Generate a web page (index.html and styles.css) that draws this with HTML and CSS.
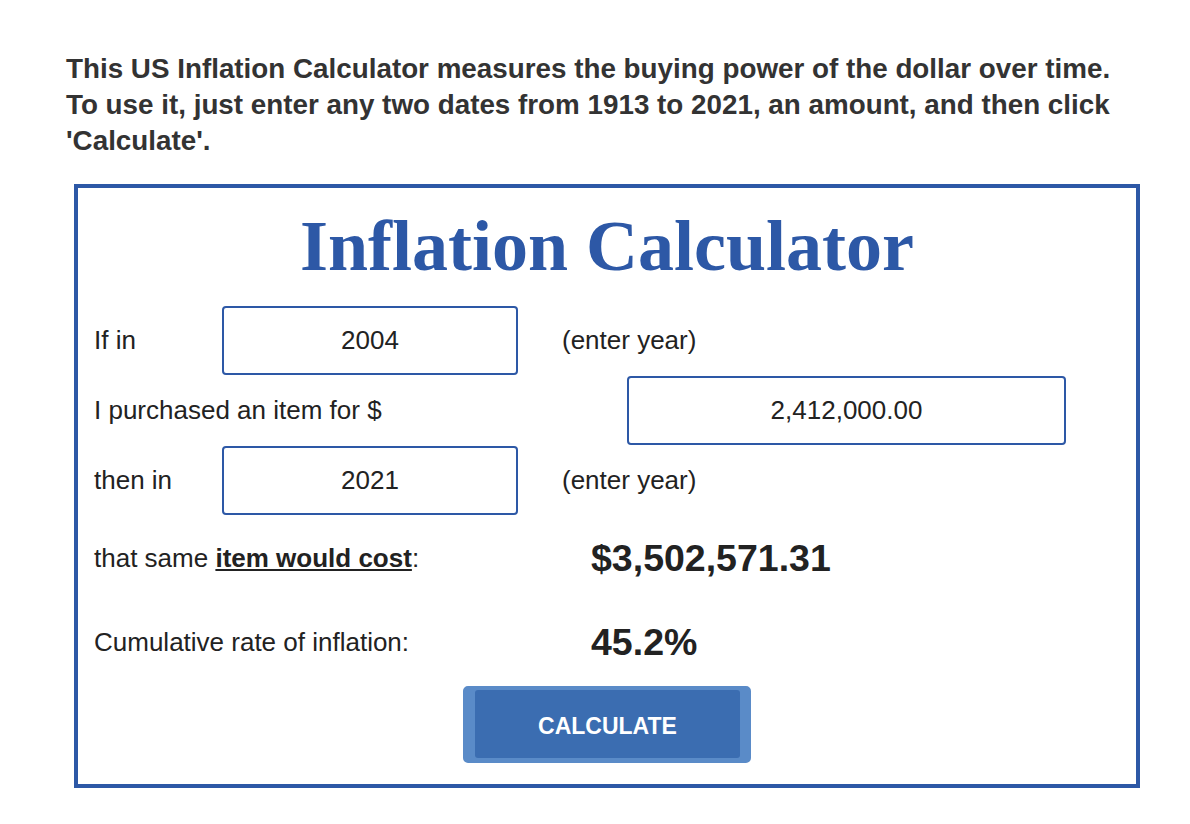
FILE: index.html
```html
<!DOCTYPE html>
<html lang="en">
<head>
<meta charset="utf-8">
<title>US Inflation Calculator</title>
<link rel="stylesheet" href="styles.css">
</head>
<body>
<div class="page">
  <p class="intro">This US Inflation Calculator measures the buying power of the dollar over time.<br>To use it, just enter any two dates from 1913 to 2021, an amount, and then click 'Calculate'.</p>
  <div class="calc">
    <h1 class="calc-title">Inflation Calculator</h1>
    <div class="row">
      <span class="label label-year">If in</span>
      <div class="field field-year">2004</div>
      <span class="hint">(enter year)</span>
    </div>
    <div class="row">
      <span class="label label-amount">I purchased an item for $</span>
      <div class="field field-amount">2,412,000.00</div>
    </div>
    <div class="row">
      <span class="label label-year">then in</span>
      <div class="field field-year">2021</div>
      <span class="hint">(enter year)</span>
    </div>
    <div class="row row-result">
      <span class="label label-result">that same <a class="link">item would cost</a>:</span>
      <span class="value">$3,502,571.31</span>
    </div>
    <div class="row row-result">
      <span class="label label-result">Cumulative rate of inflation:</span>
      <span class="value">45.2%</span>
    </div>
    <div class="actions">
      <button class="btn" type="button"><span class="btn-inner">CALCULATE</span></button>
    </div>
  </div>
</div>
</body>
</html>
```
FILE: styles.css
```css
* { box-sizing: border-box; }
html, body { margin: 0; padding: 0; background: #fff; }
body {
  font-family: "Liberation Sans", Arial, Helvetica, sans-serif;
  color: #222;
}
.page {
  width: 1074px;
  margin-left: 66px;
  padding-top: 51px;
}
.intro {
  margin: 0;
  font-size: 27.8px;
  line-height: 36px;
  font-weight: bold;
  color: #333;
}
.calc {
  margin: 25px 0 0 8px;
  width: 1066px;
  border: 4px solid #2d58a6;
  padding: 18px 0 21px 16px;
}
.calc-title {
  margin: 0 0 20px -16px;
  text-align: center;
  font-family: "Liberation Serif", "Times New Roman", serif;
  font-size: 72px;
  line-height: 80px;
  font-weight: bold;
  color: #2d58a6;
}
.row {
  display: flex;
  align-items: center;
  height: 69px;
  margin-bottom: 1px;
  font-size: 26px;
}
.label { flex: none; }
.label-year { width: 128px; }
.label-amount { width: 533px; }
.label-result { width: 497px; }
.field {
  flex: none;
  height: 69px;
  border: 2px solid #2d58a6;
  border-radius: 4px;
  display: flex;
  align-items: center;
  justify-content: center;
  font-size: 26px;
  color: #222;
}
.field-year { width: 296px; }
.field-amount { width: 439px; }
.hint { margin-left: 44px; }
.row-result { height: 84px; margin-bottom: 0; }
.link {
  font-weight: bold;
  text-decoration: underline;
  color: #222;
}
.value {
  font-size: 37.5px;
  font-weight: bold;
  color: #222;
}
.actions {
  display: flex;
  justify-content: center;
  margin: 2px 0 0 -16px;
}
.btn {
  width: 288px;
  height: 77px;
  padding: 0;
  border-style: solid;
  border-color: #5a8bc8;
  border-width: 4px 11px 5px 12px;
  border-radius: 5px;
  background: #5a8bc8;
  cursor: pointer;
}
.btn-inner {
  display: flex;
  align-items: center;
  justify-content: center;
  height: 100%;
  padding-top: 5px;
  background: #3b6db1;
  border-radius: 3px;
  color: #fff;
  font-family: "Liberation Sans", Arial, sans-serif;
  font-weight: bold;
  font-size: 23px;
}
```
